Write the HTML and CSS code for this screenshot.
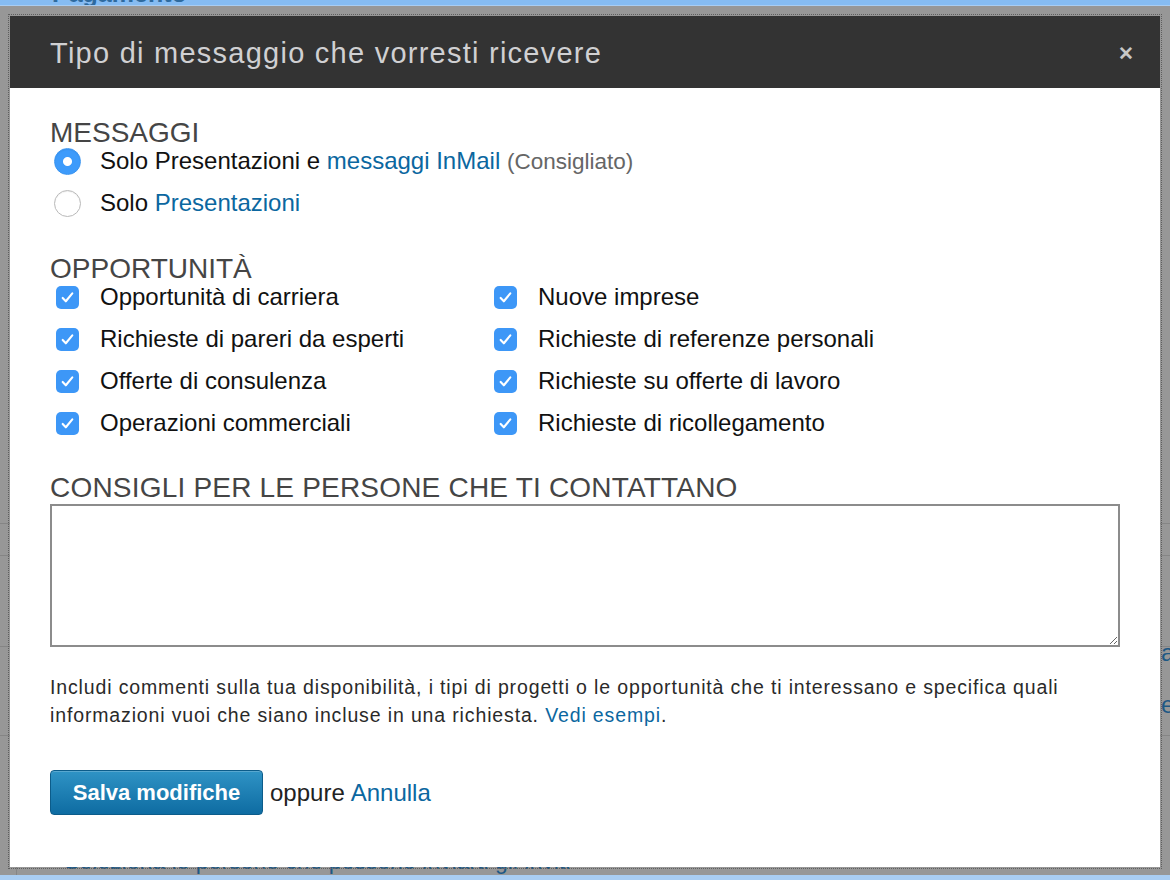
FILE: index.html
```html
<!DOCTYPE html>
<html lang="it">
<head>
<meta charset="utf-8">
<title>Tipo di messaggio che vorresti ricevere</title>
<link rel="stylesheet" href="styles.css">
</head>
<body>
<div class="page">
  <div class="topbar"><span class="topbar-title">Pagamento</span></div>
  <div class="bg-block bg-block-1"></div>
  <div class="bg-block bg-block-2"></div>
  <div class="bg-block bg-block-3"></div>
  <div class="bg-block bg-block-4">
    <div class="bg-side">
      <span>a</span>
      <span>e</span>
    </div>
  </div>
  <div class="bg-block bg-block-5">
    <span class="bg-link">Seleziona le persone che possono inviarti gli inviti</span>
  </div>
  <div class="bottombar"></div>
</div>

<div class="frame">
  <div class="modal">
    <div class="modal-header">
      <h1 class="modal-title">Tipo di messaggio che vorresti ricevere</h1>
      <span class="modal-close">&#x2715;</span>
    </div>
    <div class="modal-body">
      <section class="group group-messages">
        <h2 class="group-title">MESSAGGI</h2>
        <div class="radio-list">
          <label class="option">
            <span class="radio radio-on"></span>
            <span class="option-text">Solo Presentazioni e <a class="link" href="#">messaggi InMail</a> <span class="muted">(Consigliato)</span></span>
          </label>
          <label class="option">
            <span class="radio"></span>
            <span class="option-text">Solo <a class="link" href="#">Presentazioni</a></span>
          </label>
        </div>
      </section>

      <section class="group group-opps">
        <h2 class="group-title">OPPORTUNITÀ</h2>
        <div class="check-grid">
          <label class="option"><span class="check"><svg viewBox="0 0 24 24"><path d="M6.5 12.5l3.6 3.8 7.4-9"/></svg></span><span class="option-text">Opportunità di carriera</span></label>
          <label class="option"><span class="check"><svg viewBox="0 0 24 24"><path d="M6.5 12.5l3.6 3.8 7.4-9"/></svg></span><span class="option-text">Nuove imprese</span></label>
          <label class="option"><span class="check"><svg viewBox="0 0 24 24"><path d="M6.5 12.5l3.6 3.8 7.4-9"/></svg></span><span class="option-text">Richieste di pareri da esperti</span></label>
          <label class="option"><span class="check"><svg viewBox="0 0 24 24"><path d="M6.5 12.5l3.6 3.8 7.4-9"/></svg></span><span class="option-text">Richieste di referenze personali</span></label>
          <label class="option"><span class="check"><svg viewBox="0 0 24 24"><path d="M6.5 12.5l3.6 3.8 7.4-9"/></svg></span><span class="option-text">Offerte di consulenza</span></label>
          <label class="option"><span class="check"><svg viewBox="0 0 24 24"><path d="M6.5 12.5l3.6 3.8 7.4-9"/></svg></span><span class="option-text">Richieste su offerte di lavoro</span></label>
          <label class="option"><span class="check"><svg viewBox="0 0 24 24"><path d="M6.5 12.5l3.6 3.8 7.4-9"/></svg></span><span class="option-text">Operazioni commerciali</span></label>
          <label class="option"><span class="check"><svg viewBox="0 0 24 24"><path d="M6.5 12.5l3.6 3.8 7.4-9"/></svg></span><span class="option-text">Richieste di ricollegamento</span></label>
        </div>
      </section>

      <section class="group group-advice">
        <h2 class="group-title group-title-wide">CONSIGLI PER LE PERSONE CHE TI CONTATTANO</h2>
        <textarea class="advice"></textarea>
        <p class="help">Includi commenti sulla tua disponibilità, i tipi di progetti o le opportunità che ti interessano e specifica quali informazioni vuoi che siano incluse in una richiesta. <a class="link" href="#">Vedi esempi</a>.</p>
      </section>

      <div class="actions">
        <button class="btn-primary" type="button">Salva modifiche</button>
        <span class="or">oppure</span>
        <a class="link" href="#">Annulla</a>
      </div>
    </div>
  </div>
</div>
</body>
</html>
```

FILE: styles.css
```css
* { box-sizing: border-box; }

html, body {
  margin: 0;
  padding: 0;
}

body {
  width: 1170px;
  height: 880px;
  overflow: hidden;
  position: relative;
  background: #979797;
  font-family: "Liberation Sans", Arial, Helvetica, sans-serif;
}

/* ---- background page (dimmed) ---- */
.page {
  display: flex;
  flex-direction: column;
  height: 880px;
}

.topbar {
  height: 6px;
  background: #86bcf2;
  border-bottom: 1px solid #a9cdf2;
  overflow: hidden;
  padding-left: 52px;
}

.topbar-title {
  display: block;
  margin-top: -21px;
  font-size: 25px;
  font-weight: bold;
  color: #2e6a9e;
}

.bg-block {
  border-bottom: 1px solid #858585;
}

.bg-block-1 { height: 522px; }
.bg-block-2 { height: 32px; }
.bg-block-3 { height: 91px; }
.bg-block-4 { height: 90px; }

.bg-side {
  display: flex;
  flex-direction: column;
  gap: 24px;
  margin-top: -8px;
  margin-left: 1161px;
  white-space: nowrap;
  font-size: 24px;
  line-height: 28px;
  color: #1e5884;
}

.bg-block-5 {
  flex: 1;
  border-bottom: 0;
  padding-left: 64px;
  padding-top: 112px;
  border-left: 1px solid #858585;
  margin-left: 16px;
}

.bg-link {
  white-space: nowrap;
  font-size: 23px;
  color: #1e5884;
  margin-left: -17px;
}

.bottombar {
  height: 5px;
  background: #a9cdf2;
}

/* ---- modal ---- */
.frame {
  position: absolute;
  left: 8px;
  top: 14px;
  border: 1px dotted #5e5e5e;
  padding: 1px;
}

.modal {
  width: 1150px;
  height: 851px;
  background: #ffffff;
  display: flex;
  flex-direction: column;
}

.modal-header {
  flex: none;
  height: 72px;
  background: #333333;
  display: flex;
  align-items: center;
  justify-content: space-between;
  padding: 2px 26px 0 40px;
}

.modal-title {
  margin: 0;
  font-size: 29px;
  line-height: 34px;
  font-weight: normal;
  letter-spacing: 1.25px;
  color: #d0d0d2;
}

.modal-close {
  font-size: 19px;
  font-weight: bold;
  color: #c6c6c6;
}

.modal-body {
  padding: 34px 40px 0 40px;
  display: flex;
  flex-direction: column;
}

.group-title {
  margin: 0;
  font-size: 28px;
  line-height: 22px;
  font-weight: normal;
  color: #454545;
}

.group-title-wide {
  letter-spacing: 0.2px;
}

.radio-list,
.check-grid {
  display: grid;
  row-gap: 8px;
}

.option {
  display: flex;
  align-items: center;
  height: 34px;
  font-size: 24px;
  color: #111111;
}

.option-text {
  white-space: nowrap;
}

.radio {
  flex: none;
  width: 27px;
  height: 27px;
  border-radius: 50%;
  border: 1px solid #b9b9b9;
  background: #ffffff;
  margin-left: 4px;
  margin-right: 19px;
  box-shadow: inset 0 1px 1px rgba(0,0,0,0.06);
}

.radio-on {
  border-color: #3a94f0;
  background: radial-gradient(circle, #ffffff 0 4px, #3d9bfb 5px);
}

.link {
  color: #0b67a0;
  text-decoration: none;
}

.muted {
  color: #666666;
  font-size: 22.5px;
}

.group-opps {
  margin-top: 38px;
}

.check-grid {
  grid-template-columns: 438px 1fr;
  padding-left: 6px;
}

.check {
  flex: none;
  width: 23px;
  height: 23px;
  border-radius: 5px;
  background: #3d97f7;
  margin-right: 21px;
  display: flex;
  align-items: center;
  justify-content: center;
}

.check svg {
  width: 21px;
  height: 21px;
  fill: none;
  stroke: #ffffff;
  stroke-width: 2.4;
  stroke-linecap: round;
  stroke-linejoin: round;
}

.group-advice {
  margin-top: 37px;
}

.advice {
  display: block;
  width: 100%;
  height: 143px;
  margin: 5px 0 0 0;
  border: 2px solid #8c8c8c;
  border-radius: 0;
  resize: both;
  font: inherit;
}

.help {
  margin: 26px 0 0 0;
  font-size: 19.5px;
  letter-spacing: 0.86px;
  line-height: 28px;
  color: #2a2a2a;
}

.actions {
  margin-top: 41px;
  display: flex;
  align-items: center;
  font-size: 24px;
}

.btn-primary {
  height: 45px;
  width: 213px;
  border: 1px solid #0c5c8a;
  border-radius: 4px;
  background: linear-gradient(#2f93c5, #0e6ca2);
  color: #ffffff;
  font-family: inherit;
  font-size: 22px;
  font-weight: bold;
  padding: 0;
  box-shadow: inset 0 1px 0 rgba(255,255,255,0.2);
}

.or {
  margin-left: 7px;
  margin-right: 6px;
  color: #222222;
}
```
